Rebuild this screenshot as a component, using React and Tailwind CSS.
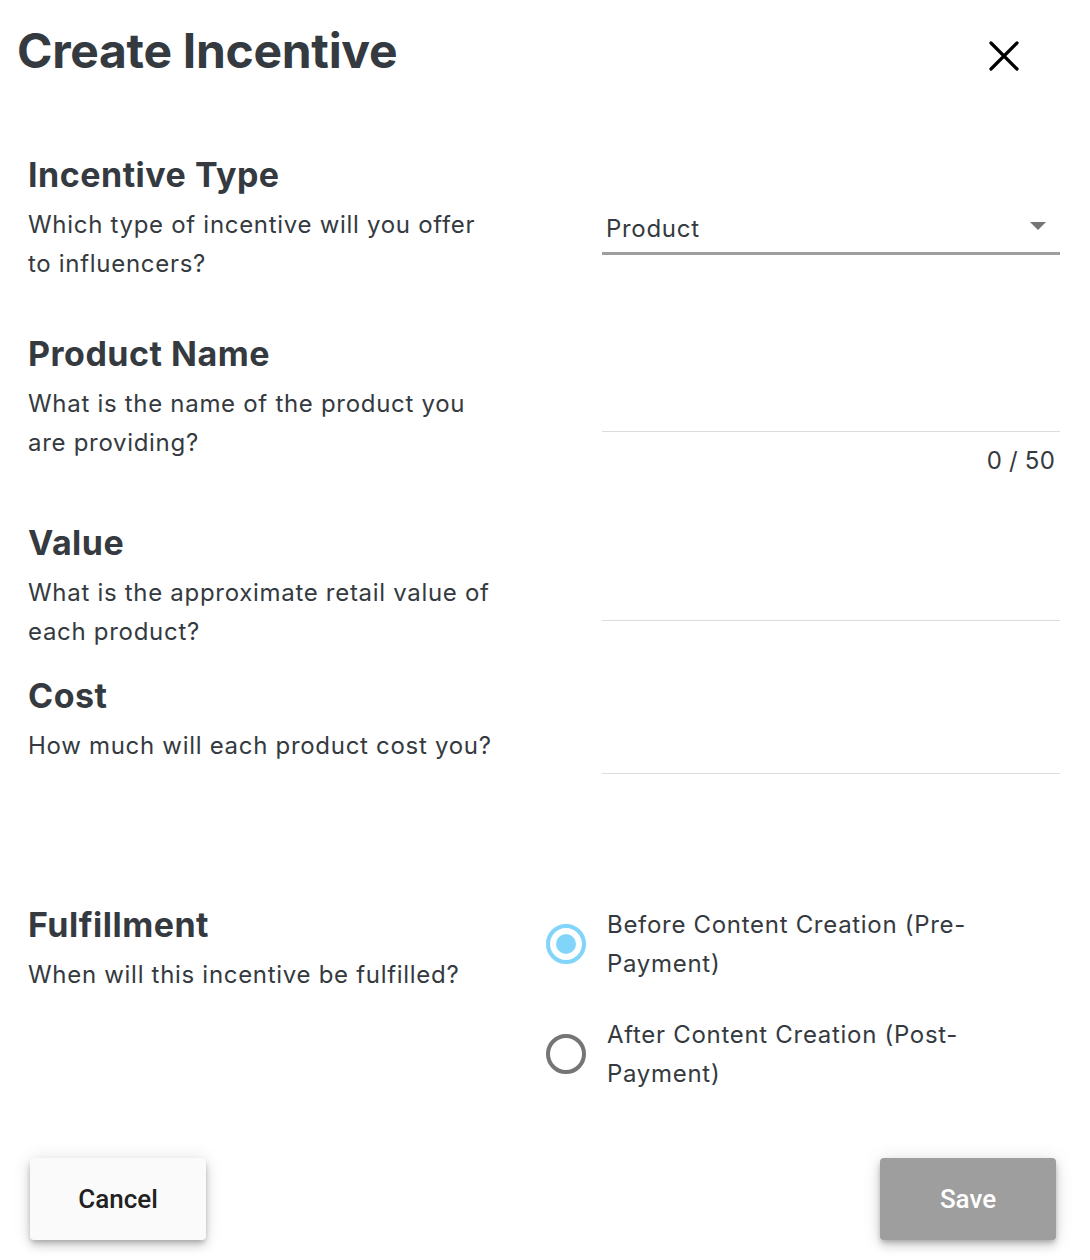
import React, { useState } from 'react';

const Field = ({ title, lines, children, className = '' }) => (
  <div className={`flex ${className}`}>
    <div className="w-[480px] ml-[28px] shrink-0">
      <h3 className="text-[34px] leading-[40px] font-bold text-[#343a40] tracking-[0.5px]">{title}</h3>
      <p className="mt-[10px] text-[24px] leading-[39px] text-[#343a40] tracking-[0.7px]">{lines}</p>
    </div>
    {children}
  </div>
);

const TextInput = ({ counter }) => (
  <div className="ml-auto mr-[30px] w-[458px]">
    <div className="h-[98px] border-b border-[#dcdcdc]" />
    {counter && (
      <div className="mt-[14px] pr-[5px] text-right text-[24px] leading-[30px] text-[#343a40] tracking-[0.2px]">{counter}</div>
    )}
  </div>
);

const Radio = ({ checked, label, onClick }) => (
  <button onClick={onClick} className="flex items-center gap-[21px] text-left">
    {checked ? (
      <span className="w-[40px] h-[40px] rounded-full border-[4px] border-[#81d4fa] flex items-center justify-center shrink-0">
        <span className="w-[20px] h-[20px] rounded-full bg-[#81d4fa]" />
      </span>
    ) : (
      <span className="w-[40px] h-[40px] rounded-full border-[4px] border-[#757575] shrink-0" />
    )}
    <span className="w-[380px] text-[24px] leading-[39px] text-[#343a40] tracking-[0.7px]">{label}</span>
  </button>
);

export default function App() {
  const [timing, setTiming] = useState('pre');

  return (
    <div className="w-[1090px] h-[1260px] bg-white font-['Inter',sans-serif] relative overflow-hidden">
      {/* Header */}
      <div className="flex items-start justify-between pt-[22px] pl-[17px] pr-[70px]">
        <h1 className="text-[48px] leading-[58px] font-bold text-[#343a40] tracking-[-0.3px]">Create Incentive</h1>
        <button className="mt-[18px] w-[32px] h-[32px] flex items-center justify-center">
          <svg width="30" height="30" viewBox="0 0 30 30">
            <path d="M2 2 L28 28 M28 2 L2 28" stroke="#000" strokeWidth="3.2" strokeLinecap="round" />
          </svg>
        </button>
      </div>

      <Field title="Incentive Type" lines={<>Which type of incentive will you offer<br />to influencers?</>} className="mt-[75px]">
        <div className="ml-auto mr-[30px] w-[458px]">
          <div className="mt-[59px] h-[41px] border-b-[3px] border-[#9e9e9e] flex items-start justify-between pl-[4px] pr-[14px]">
            <span className="text-[24px] leading-[30px] text-[#343a40] tracking-[0.7px]">Product</span>
            <svg width="16" height="8" viewBox="0 0 16 8" className="mt-[8px]">
              <path d="M0 0 L16 0 L8 8 Z" fill="#757575" />
            </svg>
          </div>
        </div>
      </Field>

      <Field title="Product Name" lines={<>What is the name of the product you<br />are providing?</>} className="mt-[51px]">
        <TextInput counter="0 / 50" />
      </Field>

      <Field title="Value" lines={<>What is the approximate retail value of<br />each product?</>} className="mt-[47px]">
        <TextInput />
      </Field>

      <Field title="Cost" lines="How much will each product cost you?" className="mt-[25px]">
        <TextInput />
      </Field>

      <Field title="Fulfillment" lines="When will this incentive be fulfilled?" className="mt-[131px]">
        <div className="ml-auto mr-[30px] w-[514px] flex flex-col gap-[32px]">
          <Radio checked={timing === 'pre'} onClick={() => setTiming('pre')} label="Before Content Creation (Pre-Payment)" />
          <Radio checked={timing === 'post'} onClick={() => setTiming('post')} label="After Content Creation (Post-Payment)" />
        </div>
      </Field>

      {/* Actions */}
      <div className="absolute left-[30px] right-[34px] bottom-[20px] flex justify-between">
        <button className="w-[176px] h-[82px] rounded-[4px] bg-[#fafafa] shadow-[0_3px_5px_-1px_rgba(0,0,0,0.2),0_6px_10px_0_rgba(0,0,0,0.14),0_1px_18px_0_rgba(0,0,0,0.12)] font-['Roboto',sans-serif] font-medium text-[26px] text-[#212121]">
          Cancel
        </button>
        <button disabled className="w-[176px] h-[82px] rounded-[4px] bg-[#9e9e9e] shadow-[0_3px_5px_-1px_rgba(0,0,0,0.2),0_6px_10px_0_rgba(0,0,0,0.14),0_1px_18px_0_rgba(0,0,0,0.12)] font-['Roboto',sans-serif] font-medium text-[26px] text-white">
          Save
        </button>
      </div>
    </div>
  );
}
